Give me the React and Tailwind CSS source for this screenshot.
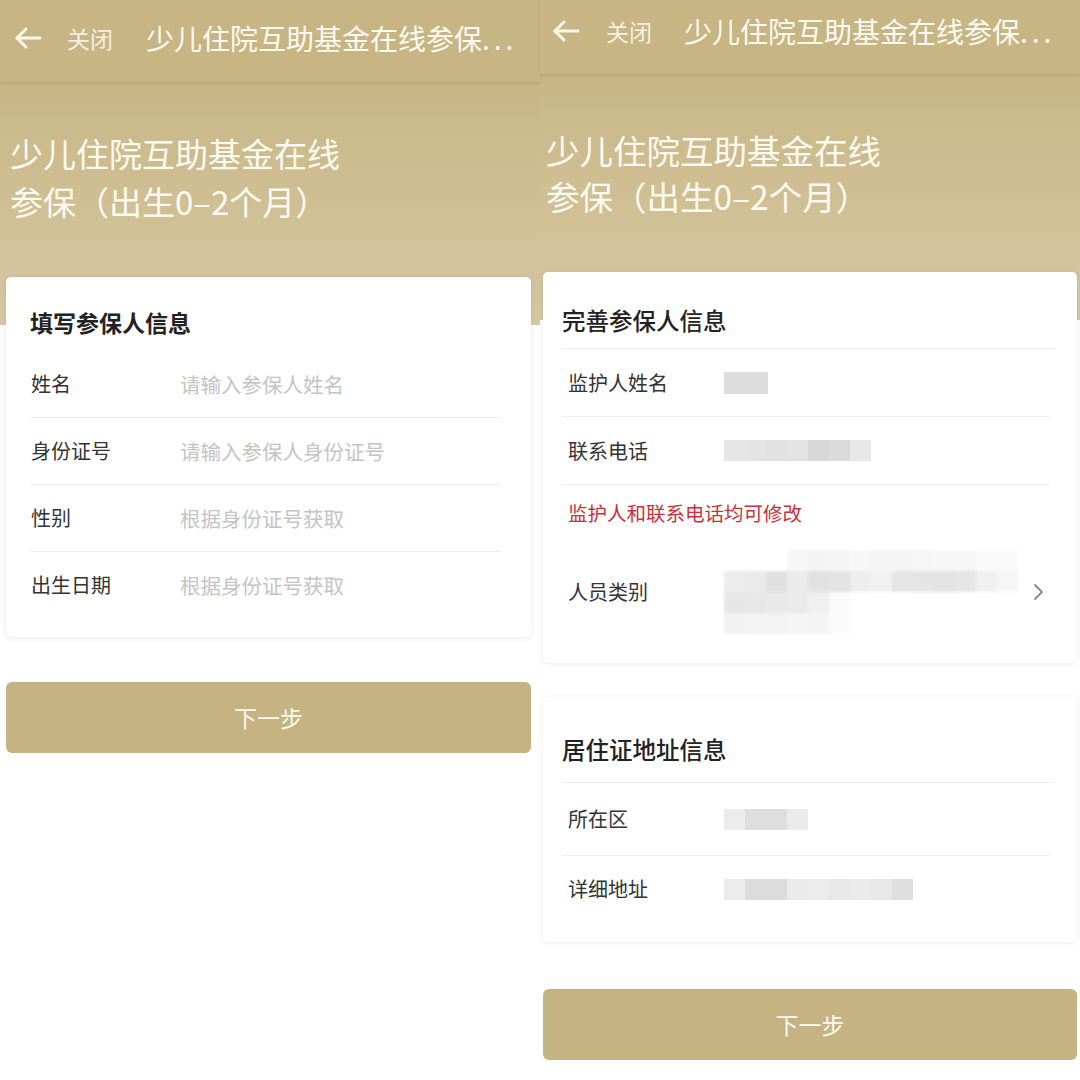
const FONT = "font-['Noto_Sans_CJK_SC','Noto_Sans',sans-serif]";

const Back = () => (
    <svg width="28" height="24" viewBox="0 0 28 24" fill="none" stroke="#fbf7ee" strokeWidth="3" strokeLinecap="round" strokeLinejoin="round">
        <path d="M26 12H3" />
        <path d="M12 3L3 12L12 21" />
    </svg>
);

const Header = ({ h, pad, arrowX, closeX, titleX }) => (
    <div className={`${h} ${pad} bg-[#c7b584] flex items-center shadow-[0_2px_2px_rgba(120,100,50,0.18)] relative z-10`}>
        <div className={arrowX}><Back /></div>
        <span className={`${closeX} text-[23px] text-[#f6f0e2] leading-none`}>关闭</span>
        <span className={`${titleX} text-[28px] text-[#fdfaf2] leading-none whitespace-nowrap`}>
            少儿住院互助基金在线参保<span className="tracking-[4px]">...</span>
        </span>
    </div>
);

// pixelated blur for hidden values
const Mosaic = ({ rows, soft }) => (
    <div className={`flex flex-col ${soft ? "blur-[1.5px]" : "blur-[0.6px]"}`}>
        {rows.map((row, i) => (
            <div key={i} className="flex">
                {row.map((c, j) => (
                    <div key={j} className="w-[21px] h-[21px]" style={{ background: c || "transparent" }} />
                ))}
            </div>
        ))}
    </div>
);

const FormRow = ({ label, placeholder }) => (
    <div className="h-[66px] flex items-center">
        <span className="w-[150px] pl-[1px] text-[20px] text-[#333]">{label}</span>
        <span className="text-[20.5px] text-[#c4c4c4]">{placeholder}</span>
    </div>
);

const Divider = ({ cls = "" }) => <div className={`h-px bg-[#eeeeee] ${cls}`} />;

const Button = ({ cls }) => (
    <div className={`${cls} h-[71px] rounded-[6px] bg-[#c6b382] flex items-center justify-center text-[23px] text-[#fffaf0]`}>
        下一步
    </div>
);

const LeftScreen = () => (
    <div className="w-[540px] flex flex-col">
        <Header h="h-[82px]" pad="pb-[6px]" arrowX="ml-[14px]" closeX="ml-[25px]" titleX="ml-[33px]" />
        <div className="h-[243px] bg-linear-to-b from-[#c8b684] to-[#d6c8a3] pl-[10px] pt-[47px] text-[33px] leading-[48px] text-[#fdfaf2]">
            <div>少儿住院互助基金在线</div>
            <div>参保（出生0–2个月）</div>
        </div>
        <div className="-mt-[48px] ml-[6px] w-[525px] bg-white rounded-[5px] shadow-[0_1px_6px_rgba(0,0,0,0.09)] px-[24px] pt-[30px] pb-[19px] relative">
            <div className="text-[23px] leading-[30px] font-bold text-[#222] pb-[14px]">填写参保人信息</div>
            <div className="pr-[7px]">
                <FormRow label="姓名" placeholder="请输入参保人姓名" />
                <Divider />
                <FormRow label="身份证号" placeholder="请输入参保人身份证号" />
                <Divider />
                <FormRow label="性别" placeholder="根据身份证号获取" />
                <Divider />
                <FormRow label="出生日期" placeholder="根据身份证号获取" />
            </div>
        </div>
        <Button cls="mt-[45px] ml-[6px] w-[525px]" />
    </div>
);

const InfoRow = ({ label, h, children }) => (
    <div className={`${h} flex items-center`}>
        <span className="w-[162px] pl-[6px] text-[20px] text-[#333]">{label}</span>
        <div className="flex-1 flex items-center">{children}</div>
    </div>
);

const RightScreen = () => (
    <div className="w-[540px] flex flex-col">
        <Header h="h-[74px]" pad="pb-[12px]" arrowX="ml-[12px]" closeX="ml-[26px]" titleX="ml-[32px]" />
        <div className="h-[246px] bg-linear-to-b from-[#c8b684] to-[#d6c8a3] pl-[6px] pt-[53px] text-[33.5px] leading-[46px] text-[#fdfaf2]">
            <div>少儿住院互助基金在线</div>
            <div>参保（出生0–2个月）</div>
        </div>
        <div className="-mt-[48px] ml-[3px] w-[534px] bg-white rounded-[5px] shadow-[0_1px_6px_rgba(0,0,0,0.08)] px-[19px] pt-[32px] pb-[25px] relative">
            <div className="text-[23.5px] leading-[32px] font-medium text-[#222] pb-[12px]">完善参保人信息</div>
            <Divider cls="mr-[3px]" />
            <div className="pr-[8px]">
                <InfoRow label="监护人姓名" h="h-[67px]">
                    <div className="w-[44px] h-[22px] bg-[#dddddd]" />
                </InfoRow>
                <Divider />
                <InfoRow label="联系电话" h="h-[67px]">
                    <Mosaic rows={[["#e6e6e6", "#e4e4e4", "#e2e2e2", "#e3e3e3", "#d8d8d8", "#dadada", "#e7e7e7"]]} />
                </InfoRow>
                <Divider />
                <div className="pl-[6px] pt-[14px] text-[19.5px] leading-[28px] text-[#c93038]">监护人和联系电话均可修改</div>
                <div className="mt-[19px] h-[92px] flex items-center">
                    <span className="w-[162px] pl-[6px] text-[20px] text-[#333]">人员类别</span>
                    <div className="flex-1 flex items-center justify-between">
                        <Mosaic soft rows={[
                            [null, null, null, "#f6f6f6", "#f4f4f4", "#f5f5f5", "#f7f7f7", "#f5f5f5", "#f5f5f5", "#f6f6f6", "#f7f7f7", "#f7f7f7", "#f9f9f9", "#f9f9f9"],
                            ["#ececec", "#eaeaea", "#e0e0e0", "#ebebeb", "#e2e2e2", "#e3e3e3", "#eeeeee", "#f1f1f1", "#e5e5e5", "#e4e4e4", "#e3e3e3", "#e6e6e6", "#f0f0f0", "#f6f6f6"],
                            ["#e6e6e6", "#e7e7e7", "#e9e9e9", "#eaeaea", "#efefef", "#fafafa"],
                            ["#f2f2f2", "#f3f3f3", "#f3f3f3", "#f5f5f5", "#f4f4f4", "#fbfbfb"],
                        ]} />
                        <svg width="12" height="18" viewBox="0 0 12 18" fill="none" stroke="#888" strokeWidth="1.8" strokeLinecap="round" strokeLinejoin="round" className="mr-[6px]">
                            <path d="M3 2L10 9L3 16" />
                        </svg>
                    </div>
                </div>
            </div>
        </div>
        <div className="mt-[34px] ml-[3px] w-[534px] bg-white rounded-[5px] shadow-[0_1px_6px_rgba(0,0,0,0.08)] px-[19px] pt-[36px] pb-[20px]">
            <div className="text-[23.5px] leading-[32px] font-medium text-[#222] pb-[17px]">居住证地址信息</div>
            <Divider cls="mr-[3px]" />
            <div className="pr-[8px]">
                <InfoRow label="所在区" h="h-[72px]">
                    <Mosaic rows={[["#ececec", "#dedede", "#dedede", "#ebebeb"]]} />
                </InfoRow>
                <Divider />
                <InfoRow label="详细地址" h="h-[66px]">
                    <Mosaic rows={[["#ececec", "#dcdcdc", "#dcdcdc", "#ebebeb", "#ececec", "#e8e8e8", "#ebebeb", "#e9e9e9", "#dfdfdf"]]} />
                </InfoRow>
            </div>
        </div>
        <Button cls="mt-[47px] ml-[3px] w-[534px]" />
    </div>
);

export default function App() {
    return (
        <div className={`w-[1080px] h-[1080px] bg-white flex overflow-hidden ${FONT}`}>
            <LeftScreen />
            <RightScreen />
        </div>
    );
}
